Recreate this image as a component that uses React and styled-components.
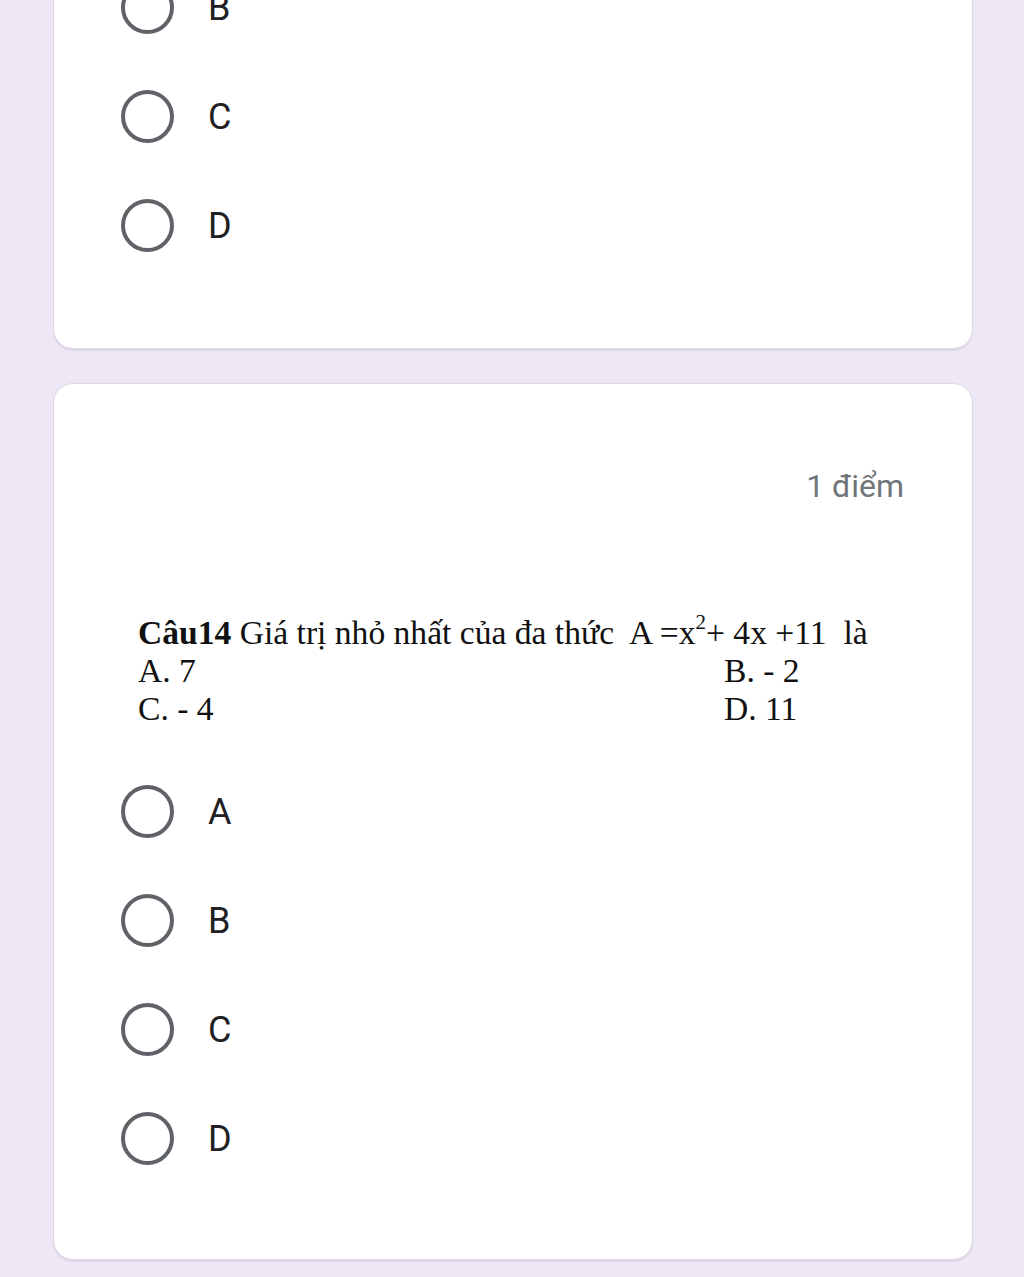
import React from 'react';
import styled, {createGlobalStyle} from "styled-components";

const GlobalStyle = createGlobalStyle`
  html, body {
    margin: 0;
    padding: 0;
    background-color: #ede7f6;
    overflow: hidden;
  }
`

const Page = styled.div`
  box-sizing: border-box;
  width: 1024px;
  height: 1277px;
  overflow: hidden;
  padding-left: 53px;
  display: flex;
  flex-direction: column;
  align-items: flex-start;
  gap: 34px;
  font-family: Roboto, "Noto Sans", sans-serif;
`

const Card = styled.div`
  box-sizing: border-box;
  width: 920px;
  background-color: #ffffff;
  border: 1px solid #dcd8e4;
  border-radius: 20px;
  box-shadow: 0 2px 1px rgba(60, 40, 90, 0.08);
  padding: ${props => props.$pad};
  margin-top: ${props => props.$offset || '0'};
  flex-shrink: 0;
`

const PointRow = styled.div`
  display: flex;
  justify-content: flex-end;
  font-size: 32px;
  line-height: 40px;
  color: #70757a;
`

const Question = styled.div`
  margin: 108px 0 29px 17px;
  font-family: "Liberation Serif", "Times New Roman", serif;
  font-size: 33.6px;
  line-height: 38px;
  color: #111;
`

const QLine = styled.div`
  white-space: nowrap;
`

const Bold = styled.b`
  font-weight: 700;
`

const Sup = styled.sup`
  font-size: 21px;
  line-height: 0;
  vertical-align: 0;
  position: relative;
  top: -15px;
`

const ChoiceGrid = styled.div`
  display: grid;
  grid-template-columns: 586px auto;
  white-space: nowrap;
`

const OptionList = styled.div`
  display: flex;
  flex-direction: column;
`

const Option = styled.label`
  display: flex;
  align-items: center;
  height: 109px;
  gap: 34px;
  font-size: 36px;
  color: #202124;
`

const Radio = styled.span`
  box-sizing: border-box;
  width: 53px;
  height: 53px;
  border: 4.5px solid #5f6368;
  border-radius: 50%;
  flex-shrink: 0;
`

const Options = ({items}) => (
    <OptionList>
      {items.map(item => (
          <Option key={item}>
            <Radio/>
            <span>{item}</span>
          </Option>
      ))}
    </OptionList>
);

const App = () => {
  return (
      <>
        <GlobalStyle/>
        <Page>
          <Card $offset="-48px" $pad="0 69px 68px 67px">
            <Options items={['B', 'C', 'D']}/>
          </Card>
          <Card $pad="82px 68px 66px 67px">
            <PointRow>1 điểm</PointRow>
            <Question>
              <QLine>
                <Bold>Câu14</Bold> Giá trị nhỏ nhất của đa thức&nbsp; A =x<Sup>2</Sup>+ 4x +11&nbsp; là
              </QLine>
              <ChoiceGrid>
                <span>A. 7</span>
                <span>B. - 2</span>
                <span>C. - 4</span>
                <span>D. 11</span>
              </ChoiceGrid>
            </Question>
            <Options items={['A', 'B', 'C', 'D']}/>
          </Card>
        </Page>
      </>
  );
};

export default App;
